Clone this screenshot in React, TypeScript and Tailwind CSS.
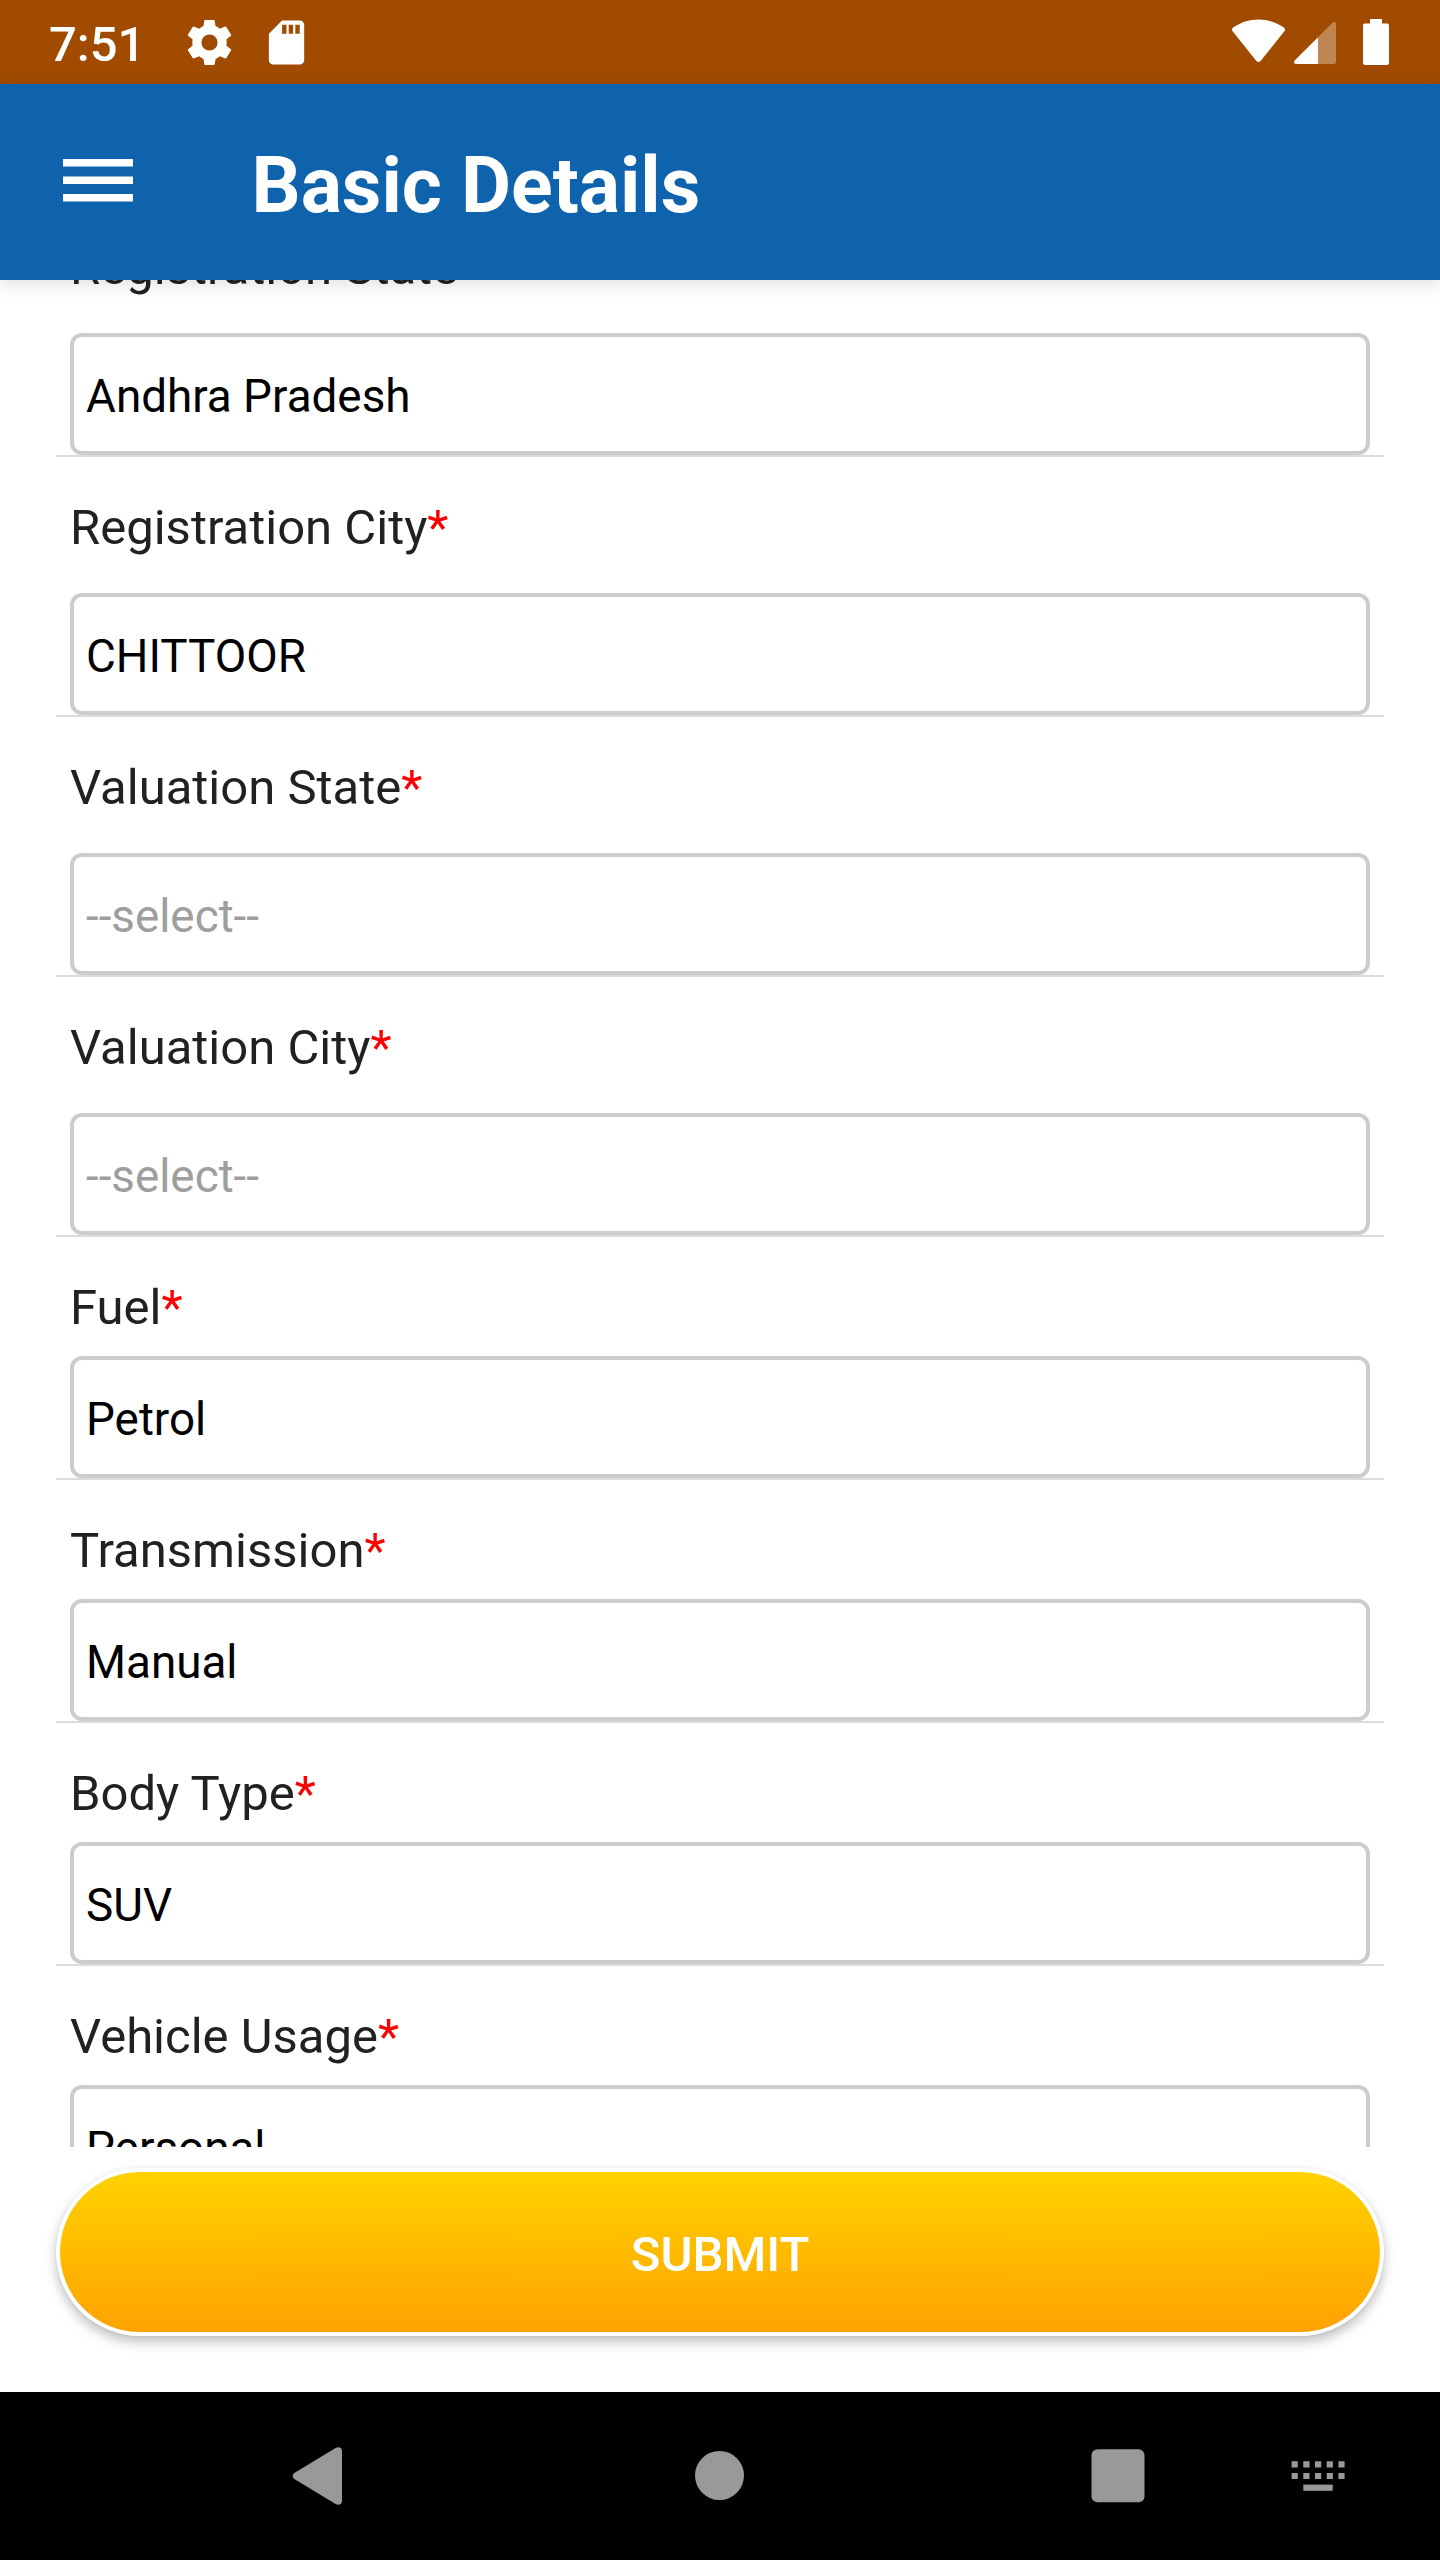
import type { ReactNode } from "react";
import { MdSdCard } from "react-icons/md";

type FieldProps = {
  label: string;
  value: string;
  tall?: boolean;
  placeholder?: boolean;
};

const fields: FieldProps[] = [
  { label: "Registration State", value: "Andhra Pradesh", tall: true },
  { label: "Registration City", value: "CHITTOOR", tall: true },
  { label: "Valuation State", value: "--select--", tall: true, placeholder: true },
  { label: "Valuation City", value: "--select--", tall: true, placeholder: true },
  { label: "Fuel", value: "Petrol" },
  { label: "Transmission", value: "Manual" },
  { label: "Body Type", value: "SUV" },
  { label: "Vehicle Usage", value: "Personal" },
];

function GearIcon() {
  return (
    <svg className="size-[47px]" viewBox="0 0 140 140" fill="currentColor" fillRule="evenodd">
      <path d="M57 3h26q2 0 2.400 2L88 21q7 3 13 8l16-6.500q2-.8 3 1L134.500 47q1 2-.6 3.200L120.500 60q1.200 10 0 20l13.400 9.800q1.600 1.200.6 3.200L120 116.500q-1 1.800-3 1L101 111q-6 5-13 8l-2.600 16q-.4 2-2.400 2H57q-2 0-2.400-2L52 119q-7-3-13-8l-16 6.500q-2 .8-3-1L5.500 93q-1-2 .6-3.200L19.500 80q-1.200-10 0-20L6.100 50.200Q4.500 49 5.500 47L20 23.500q1-1.800 3-1L39 29q6-5 13-8l2.600-16Q55 3 57 3ZM70 46a24 24 0 1 0 0 48 24 24 0 1 0 0-48Z" />
    </svg>
  );
}

function StatusBar() {
  return (
    <div className="flex h-[84px] shrink-0 items-center bg-[#a04b00] pl-[49px] pr-[51px] text-white">
      <span className="mt-1 w-[137px] text-[49px] leading-none font-medium">7:51</span>
      <GearIcon />
      <MdSdCard className="ml-[27px] size-[53px]" />
      <svg className="ml-auto h-[84px] w-[53px]" viewBox="0 0 53 84" fill="currentColor">
        <path d="M1.2 27.6C8.6 22.4 17.2 19.5 26.5 19.5s17.9 2.9 25.3 8.1c1.4 1 1.6 2.4.6 3.7L28.6 60.9c-1.2 1.5-3 1.5-4.2 0L.6 31.3c-1-1.3-.8-2.7.6-3.7Z" />
      </svg>
      <svg className="ml-[9px] h-[84px] w-[42px]" viewBox="0 0 42 84" fill="currentColor">
        <path d="M24 37.2V64H2C.2 64-.6 61.8.6 60.6Z" />
        <path fillOpacity=".33" d="M24 37.2 38.300 22.900C39.700 21.500 42 22 42 24v38c0 1.200-.8 2-2 2H24Z" />
      </svg>
      <svg className="ml-[27px] h-[84px] w-[26px]" viewBox="0 0 26 84" fill="currentColor">
        <path d="M7 19h12v4.500h5c1.200 0 2 .8 2 2V63c0 1.200-.8 2-2 2H2c-1.200 0-2-.8-2-2V25.500c0-1.200.8-2 2-2h5Z" />
      </svg>
    </div>
  );
}

function Header() {
  return (
    <header className="relative z-10 flex h-[196px] shrink-0 items-center bg-[#0f62ac] pl-[63px] text-white shadow-[0_4px_16px_rgba(0,0,0,0.13)]">
      <svg className="mb-[3px] h-[43px] w-[70px]" viewBox="0 0 70 43" fill="currentColor">
        <path d="M0 0h70v7.500H0zM0 17.500h70V25H0zM0 35h70v7.500H0z" />
      </svg>
      <h1 className="mt-[9px] ml-[118.5px] text-[77px] leading-none font-bold">Basic Details</h1>
    </header>
  );
}

function Field({ label, value, tall, placeholder }: FieldProps) {
  return (
    <div className="border-b-2 border-[#dcdcdc] px-3.5">
      <div className={tall ? "h-[136px] pt-[42px]" : "h-[119px] pt-[42px]"}>
        <label className="block text-[49px] leading-[58px] text-[#212121]">
          {label}
          <span className="text-[#ff0000]">*</span>
        </label>
      </div>
      <div className="flex h-[122px] items-center rounded-[12px] border-4 border-[#cccccc] pt-[5px] pl-3">
        <span
          className={
            placeholder
              ? "text-[45.8px] leading-[54px] text-[#9e9e9e]"
              : "text-[45.8px] leading-[54px] text-black"
          }
        >
          {value}
        </span>
      </div>
    </div>
  );
}

function NavIcon({ className, children }: { className: string; children: ReactNode }) {
  return (
    <svg className={className} viewBox="0 0 60 60" fill="#999999">
      {children}
    </svg>
  );
}

function NavBar() {
  return (
    <nav className="flex h-[168px] shrink-0 items-center bg-black pl-[288px]">
      <NavIcon className="size-[60px]">
        <path d="M6.700 26.800 47.200 2.300C50.500.3 54 1.500 54 5v50c0 3.500-3.500 4.700-6.800 2.700L6.700 33.200c-2.600-1.600-2.600-4.800 0-6.400Z" />
      </NavIcon>
      <NavIcon className="ml-[342px] size-[60px]">
        <circle cx="29.500" cy="29.500" r="24.500" />
      </NavIcon>
      <NavIcon className="ml-[338px] size-[60px]">
        <rect x="3.500" y="3.200" width="53" height="53" rx="6" />
      </NavIcon>
      <NavIcon className="ml-[140px] size-[60px]">
        {[0, 1, 2, 3, 4].map((column) => (
          <path
            key={column}
            transform={`translate(${column * 11.7} 0)`}
            d="M3.600 15.200h6.200v6.200H3.600zM3.600 26.900h6.200v6.200H3.600z"
          />
        ))}
        <path d="M15.300 38.600h29.400v6.200H15.300z" />
      </NavIcon>
    </nav>
  );
}

export default function App() {
  return (
    <div className="flex h-[2560px] w-[1440px] flex-col overflow-hidden bg-white font-['Roboto',sans-serif]">
      <StatusBar />
      <Header />
      <main className="h-[1867px] shrink-0 overflow-hidden px-14">
        <div className="-mt-[83px]">
          {fields.map((field) => (
            <Field key={field.label} {...field} />
          ))}
        </div>
      </main>
      <div className="flex-1 px-14 pt-[21px]">
        <button className="block h-[168px] w-full rounded-full bg-white p-1 shadow-[0_6px_12px_rgba(0,0,0,0.25),0_0_3px_rgba(0,0,0,0.05)]">
          <span className="flex size-full items-center justify-center rounded-full bg-linear-to-b from-[#ffd200] to-[#ffa200] pt-1 text-[49px] leading-none font-medium text-white">
            SUBMIT
          </span>
        </button>
      </div>
      <NavBar />
    </div>
  );
}
